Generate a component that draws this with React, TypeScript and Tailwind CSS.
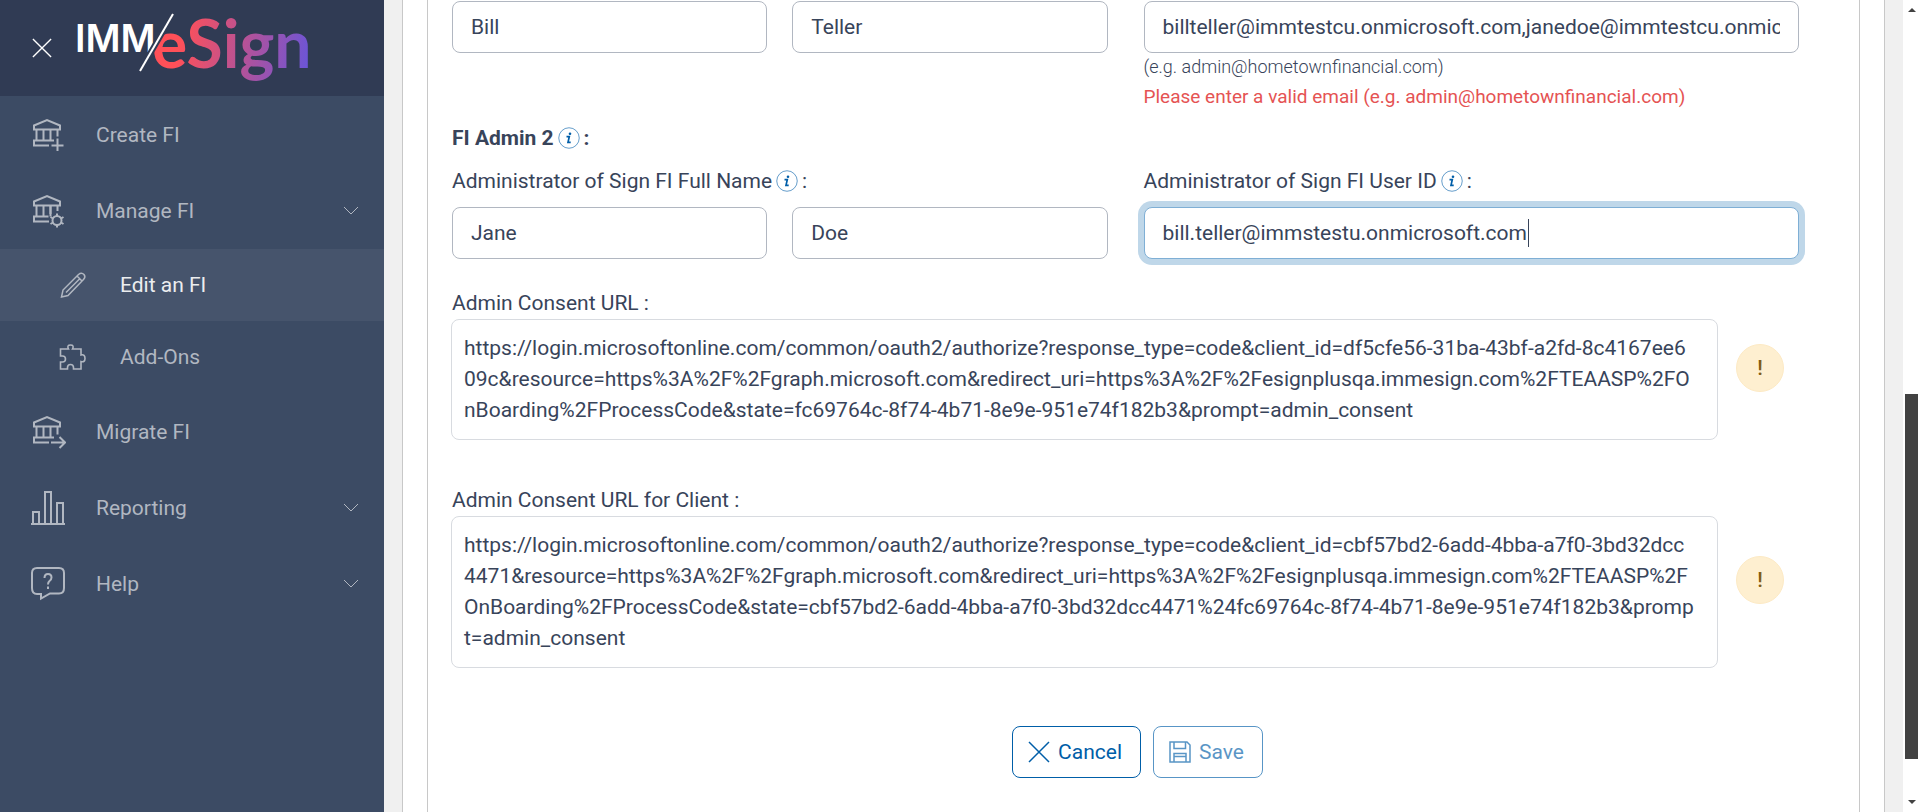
import React, { useState } from 'react'

interface IconProps {
  className?: string
}

const BankIcon: React.FC<IconProps & { badge: 'plus' | 'gear' | 'arrow' }> = ({ className, badge }) => (
  <svg viewBox="0 0 36 36" className={className} fill="none" stroke="currentColor" strokeWidth="2">
    <path d="M4 12.500V8.500L17 3L30 8.500V12.500ZM6.500 13V23.500M13.500 13V23.500M20.500 13V23.500" />
    {badge === 'plus' && <path d="M27.500 13V19.500M24 23.500H4V28.500H19M27.500 21.500V34M21.500 28.500H33.500" />}
    {badge === 'gear' && (
      <>
        <path d="M27.500 13V18M18.500 23.500H4V28.500H19M20.500 13V21" />
        <circle cx="27" cy="27.500" r="4.500" />
        <path d="M27 20.500V23M27 32V34.500M20.500 24L23 25.500M31 29.500L33.500 31M20.500 31L23 29.500M31 25.500L33.500 24" />
      </>
    )}
    {badge === 'arrow' && (
      <path d="M27.500 13V20.500M24 23.500H4V28.500H19M21 28.500H35M29.500 23L35 28.500L29.500 34" />
    )}
  </svg>
)

const ChartIcon: React.FC<IconProps> = ({ className }) => (
  <svg viewBox="0 0 36 36" className={className} fill="none" stroke="currentColor" strokeWidth="2">
    <path d="M1 34H35M3 34V22H9V34M15 34V2H21V34M27 34V13H33V34" />
  </svg>
)

const HelpIcon: React.FC<IconProps> = ({ className }) => (
  <svg viewBox="0 0 36 36" className={className} fill="none" stroke="currentColor" strokeWidth="2">
    <path d="M7 2H29Q34 2 34 7V22Q34 27.500 29 27.500H20L11 32.500V28H7Q2 28 2 22V7Q2 2 7 2Z" />
    <path d="M14.500 12Q14.500 8 18 8Q21.500 8 21.500 11.500Q21.500 13.500 19.500 15Q18 16.200 18 18.500M18 20.500V23" />
  </svg>
)

const PencilIcon: React.FC<IconProps> = ({ className }) => (
  <svg viewBox="0 0 30 30" className={className} fill="none" stroke="currentColor" strokeWidth="1.500">
    <path d="M3.500 27L5 20L20.500 4.500Q23.500 2 26 4.500Q28 7 25.500 9.500L10 25.500ZM19 6L24 11M22 8.500L8 22.500" />
  </svg>
)

const PuzzleIcon: React.FC<IconProps> = ({ className }) => (
  <svg viewBox="0 0 30 30" className={className} fill="none" stroke="currentColor" strokeWidth="1.600">
    <path d="M2.500 7H10.500Q8.500 3 12.500 3Q16.500 3 14.500 7H23V13Q27 12 27 16.500Q27 20.500 23 19.500V27H15.500V25.500Q15.500 22.500 12.500 22.500Q9.500 22.500 9.500 25.500V27H2.500V20H4.500Q7.500 20 7.500 17Q7.500 14 4.500 14H2.500Z" />
  </svg>
)

const ChevronIcon: React.FC<IconProps> = ({ className }) => (
  <svg viewBox="0 0 16 10" className={className} fill="none" stroke="currentColor">
    <path d="M1 1L8 8L15 1" />
  </svg>
)

const CrossIcon: React.FC<IconProps> = ({ className }) => (
  <svg viewBox="0 0 22 22" className={className} fill="none" stroke="currentColor" strokeWidth="1.500">
    <path d="M1 1L21 21M21 1L1 21" />
  </svg>
)

const SaveIcon: React.FC<IconProps> = ({ className }) => (
  <svg viewBox="0 0 22 22" className={className} fill="none" stroke="currentColor" strokeWidth="1.500">
    <path d="M1 1H18L21 4V21H1ZM5 1V7.500H16.500V1M5 21V12.500H17V21M5 15.500H17" />
  </svg>
)

const InfoIcon = () => (
  <svg viewBox="0 0 22 22" className="h-[22px] w-[22px] text-[#005ea8]" role="img" aria-label="More information">
    <circle cx="11" cy="11" r="10.250" fill="none" stroke="currentColor" strokeOpacity="0.600" />
    <circle cx="12" cy="6.800" r="1.300" fill="currentColor" />
    <path d="M8.500 9.700H11.300L10 15.300H12.700" fill="none" stroke="currentColor" strokeWidth="1.700" />
  </svg>
)

const Logo = () => (
  <svg viewBox="0 0 248 96" className="h-24 w-[248px]" role="img" aria-label="IMM eSign">
    <defs>
      <linearGradient id="brand" gradientUnits="userSpaceOnUse" x1="82" y1="40" x2="234" y2="70">
        <stop offset="0.150" stopColor="#ff5058" />
        <stop offset="0.600" stopColor="#b0529c" />
        <stop offset="1" stopColor="#6a55d8" />
      </linearGradient>
    </defs>
    <text x="1" y="52" className="fill-white font-[Inter] text-[38px] font-semibold">IMM</text>
    <text x="78" y="68" fill="url(#brand)" className="font-[Lato] text-[66px] font-bold">eSign</text>
    <path d="M66 71L99 14" stroke="#303b54" strokeWidth="6" />
    <path d="M66 71L99 14" stroke="#fff" strokeWidth="2" />
  </svg>
)

const navItem = 'flex h-[76px] w-full items-center pl-[30px] pr-[25px] text-left'
const navIcon = 'mr-[30px] h-9 w-9'
const subItem = 'flex h-[72px] items-center gap-8 pl-[58px]'

const Sidebar = () => (
  <aside className="w-[384px] shrink-0 bg-[#3c4b64] text-[#b1b7c1]">
    <div className="flex h-24 items-center gap-[22px] bg-[#303b54] pl-8">
      <button type="button" aria-label="Close menu" className="text-white">
        <CrossIcon className="h-5 w-5" />
      </button>
      <Logo />
    </div>
    <nav className="pt-px">
      <a href="#create" className={navItem}>
        <BankIcon badge="plus" className={navIcon} />
        Create FI
      </a>
      <button type="button" className={navItem}>
        <BankIcon badge="gear" className={navIcon} />
        Manage FI
        <ChevronIcon className="ml-auto h-[10px] w-4" />
      </button>
      <ul className="pb-px">
        <li>
          <a href="#edit" className={`${subItem} bg-[#46546c] text-[#ebedef]`}>
            <PencilIcon className="h-[30px] w-[30px] text-[#b1b7c1]" />
            Edit an FI
          </a>
        </li>
        <li>
          <a href="#add-ons" className={subItem}>
            <PuzzleIcon className="h-[30px] w-[30px]" />
            Add-Ons
          </a>
        </li>
      </ul>
      <a href="#migrate" className={navItem}>
        <BankIcon badge="arrow" className={navIcon} />
        Migrate FI
      </a>
      <button type="button" className={navItem}>
        <ChartIcon className={navIcon} />
        Reporting
        <ChevronIcon className="ml-auto h-[10px] w-4" />
      </button>
      <button type="button" className={navItem}>
        <HelpIcon className={navIcon} />
        Help
        <ChevronIcon className="ml-auto h-[10px] w-4" />
      </button>
    </nav>
  </aside>
)

const field = 'h-[52px] w-full rounded-lg border border-[#b1b7c1] bg-white px-[18px] outline-none'
const fieldLabel = 'flex h-[45px] items-center gap-1 pb-2'

interface ConsentUrlProps {
  id: string
  label: string
  url: string
}

const ConsentUrl: React.FC<ConsentUrlProps> = ({ id, label, url }) => (
  <section>
    <h3 id={id} className="h-8 leading-8">{label}</h3>
    <div className="flex items-center gap-[18px]">
      <p
        aria-labelledby={id}
        className="-ml-px flex-1 rounded-lg border border-[#d8dbe0] py-[13px] pr-[23px] pl-3 leading-[31px] break-all"
      >
        {url}
      </p>
      <span className="mb-6 flex h-12 w-12 items-center justify-center rounded-full border border-[#fdeac5] bg-[#feefd0] font-medium text-[#815c15]">
        !
      </span>
    </div>
  </section>
)

const Scrollbar = () => (
  <div aria-hidden="true" className="sticky top-0 flex h-screen w-[17px] shrink-0 flex-col items-center bg-white py-2 text-[#424242]">
    <svg viewBox="0 0 8 4" className="h-1 w-2" fill="currentColor">
      <path d="M4 0L8 4H0Z" />
    </svg>
    <div className="grow-[382]" />
    <div className="w-[13px] grow-[365] bg-[#424242]" />
    <div className="grow-[41]" />
    <svg viewBox="0 0 8 4" className="h-1 w-2" fill="currentColor">
      <path d="M0 0H8L4 4Z" />
    </svg>
  </div>
)

export default function App() {
  const [admins, setAdmins] = useState([
    { first: 'Bill', last: 'Teller', email: 'billteller@immtestcu.onmicrosoft.com,janedoe@immtestcu.onmicrosoft.com' },
    { first: 'Jane', last: 'Doe', email: 'bill.teller@immstestu.onmicrosoft.com' },
  ])

  const update = (index: number, key: 'first' | 'last' | 'email') => (e: React.ChangeEvent<HTMLInputElement>) =>
    setAdmins(admins.map((a, i) => (i === index ? { ...a, [key]: e.target.value } : a)))

  return (
    <div className="flex min-h-screen bg-[#f0f0f0] font-[Roboto,sans-serif] text-[21px] leading-8 text-[#38445a]">
      <Sidebar />
      <main className="flex min-w-0 flex-1 px-[18px]">
        <div className="flex flex-1 border-x border-[#c8c8c8] bg-white px-6">
          <form className="flex-1 border-x border-[#c8c8c8] pt-px pr-[60px] pl-6" onSubmit={(e) => e.preventDefault()}>
            <div className="grid grid-cols-2 gap-x-9">
              <div className="grid grid-cols-2 items-start gap-x-[25px]">
                <input aria-label="FI Admin 1 first name" className={field} value={admins[0].first} onChange={update(0, 'first')} />
                <input aria-label="FI Admin 1 last name" className={field} value={admins[0].last} onChange={update(0, 'last')} />
              </div>
              <div>
                <input aria-label="FI Admin 1 user ID" className={field} value={admins[0].email} onChange={update(0, 'email')} />
                <p className="text-[18px] leading-[27px] font-light">(e.g. admin@hometownfinancial.com)</p>
                <p className="text-[19px] leading-[33px] text-[#e55353]">
                  Please enter a valid email (e.g. admin@hometownfinancial.com)
                </p>
              </div>
            </div>

            <h2 className="mt-2 flex h-9 items-center gap-1 pb-0.5 font-bold">
              FI Admin 2 <InfoIcon /> :
            </h2>

            <div className="mt-[5px] grid grid-cols-2 gap-x-9">
              <div>
                <label htmlFor="first-name" className={fieldLabel}>
                  Administrator of Sign FI Full Name <InfoIcon /> :
                </label>
                <div className="grid grid-cols-2 gap-x-[25px]">
                  <input id="first-name" className={field} value={admins[1].first} onChange={update(1, 'first')} />
                  <input aria-label="Last name" className={field} value={admins[1].last} onChange={update(1, 'last')} />
                </div>
              </div>
              <div>
                <label htmlFor="user-id" className={fieldLabel}>
                  Administrator of Sign FI User ID <InfoIcon /> :
                </label>
                <div className="relative">
                  <input
                    id="user-id"
                    autoFocus
                    className="h-[52px] w-full rounded-lg border border-[#7fafd5] bg-white px-[18px] caret-transparent ring-6 ring-[#bfd7e9] outline-none"
                    value={admins[1].email}
                    onChange={update(1, 'email')}
                  />
                  <span aria-hidden="true" className="absolute top-3 left-[384px] h-7 w-px bg-[#38445a]" />
                </div>
              </div>
            </div>

            <div className="mt-7 flex flex-col gap-11 pr-[15px]">
              <ConsentUrl
                id="consent-url"
                label="Admin Consent URL :"
                url="https://login.microsoftonline.com/common/oauth2/authorize?response_type=code&client_id=df5cfe56-31ba-43bf-a2fd-8c4167ee609c&resource=https%3A%2F%2Fgraph.microsoft.com&redirect_uri=https%3A%2F%2Fesignplusqa.immesign.com%2FTEAASP%2FOnBoarding%2FProcessCode&state=fc69764c-8f74-4b71-8e9e-951e74f182b3&prompt=admin_consent"
              />
              <ConsentUrl
                id="client-consent-url"
                label="Admin Consent URL for Client :"
                url="https://login.microsoftonline.com/common/oauth2/authorize?response_type=code&client_id=cbf57bd2-6add-4bba-a7f0-3bd32dcc4471&resource=https%3A%2F%2Fgraph.microsoft.com&redirect_uri=https%3A%2F%2Fesignplusqa.immesign.com%2FTEAASP%2FOnBoarding%2FProcessCode&state=cbf57bd2-6add-4bba-a7f0-3bd32dcc4471%24fc69764c-8f74-4b71-8e9e-951e74f182b3&prompt=admin_consent"
              />
            </div>

            <div className="mt-[58px] flex justify-center gap-3 pb-8 pl-6">
              <button type="button" className="flex h-[52px] items-center gap-2 rounded-lg border border-[#005ea8] pr-[18px] pl-[15px] text-[#005ea8]">
                <CrossIcon className="h-[22px] w-[22px]" />
                Cancel
              </button>
              <button type="submit" disabled className="flex h-[52px] items-center gap-2 rounded-lg border border-[#005ea8] pr-[18px] pl-[15px] text-[#005ea8] opacity-65">
                <SaveIcon className="h-[22px] w-[22px]" />
                Save
              </button>
            </div>
          </form>
        </div>
      </main>
      <Scrollbar />
    </div>
  )
}
